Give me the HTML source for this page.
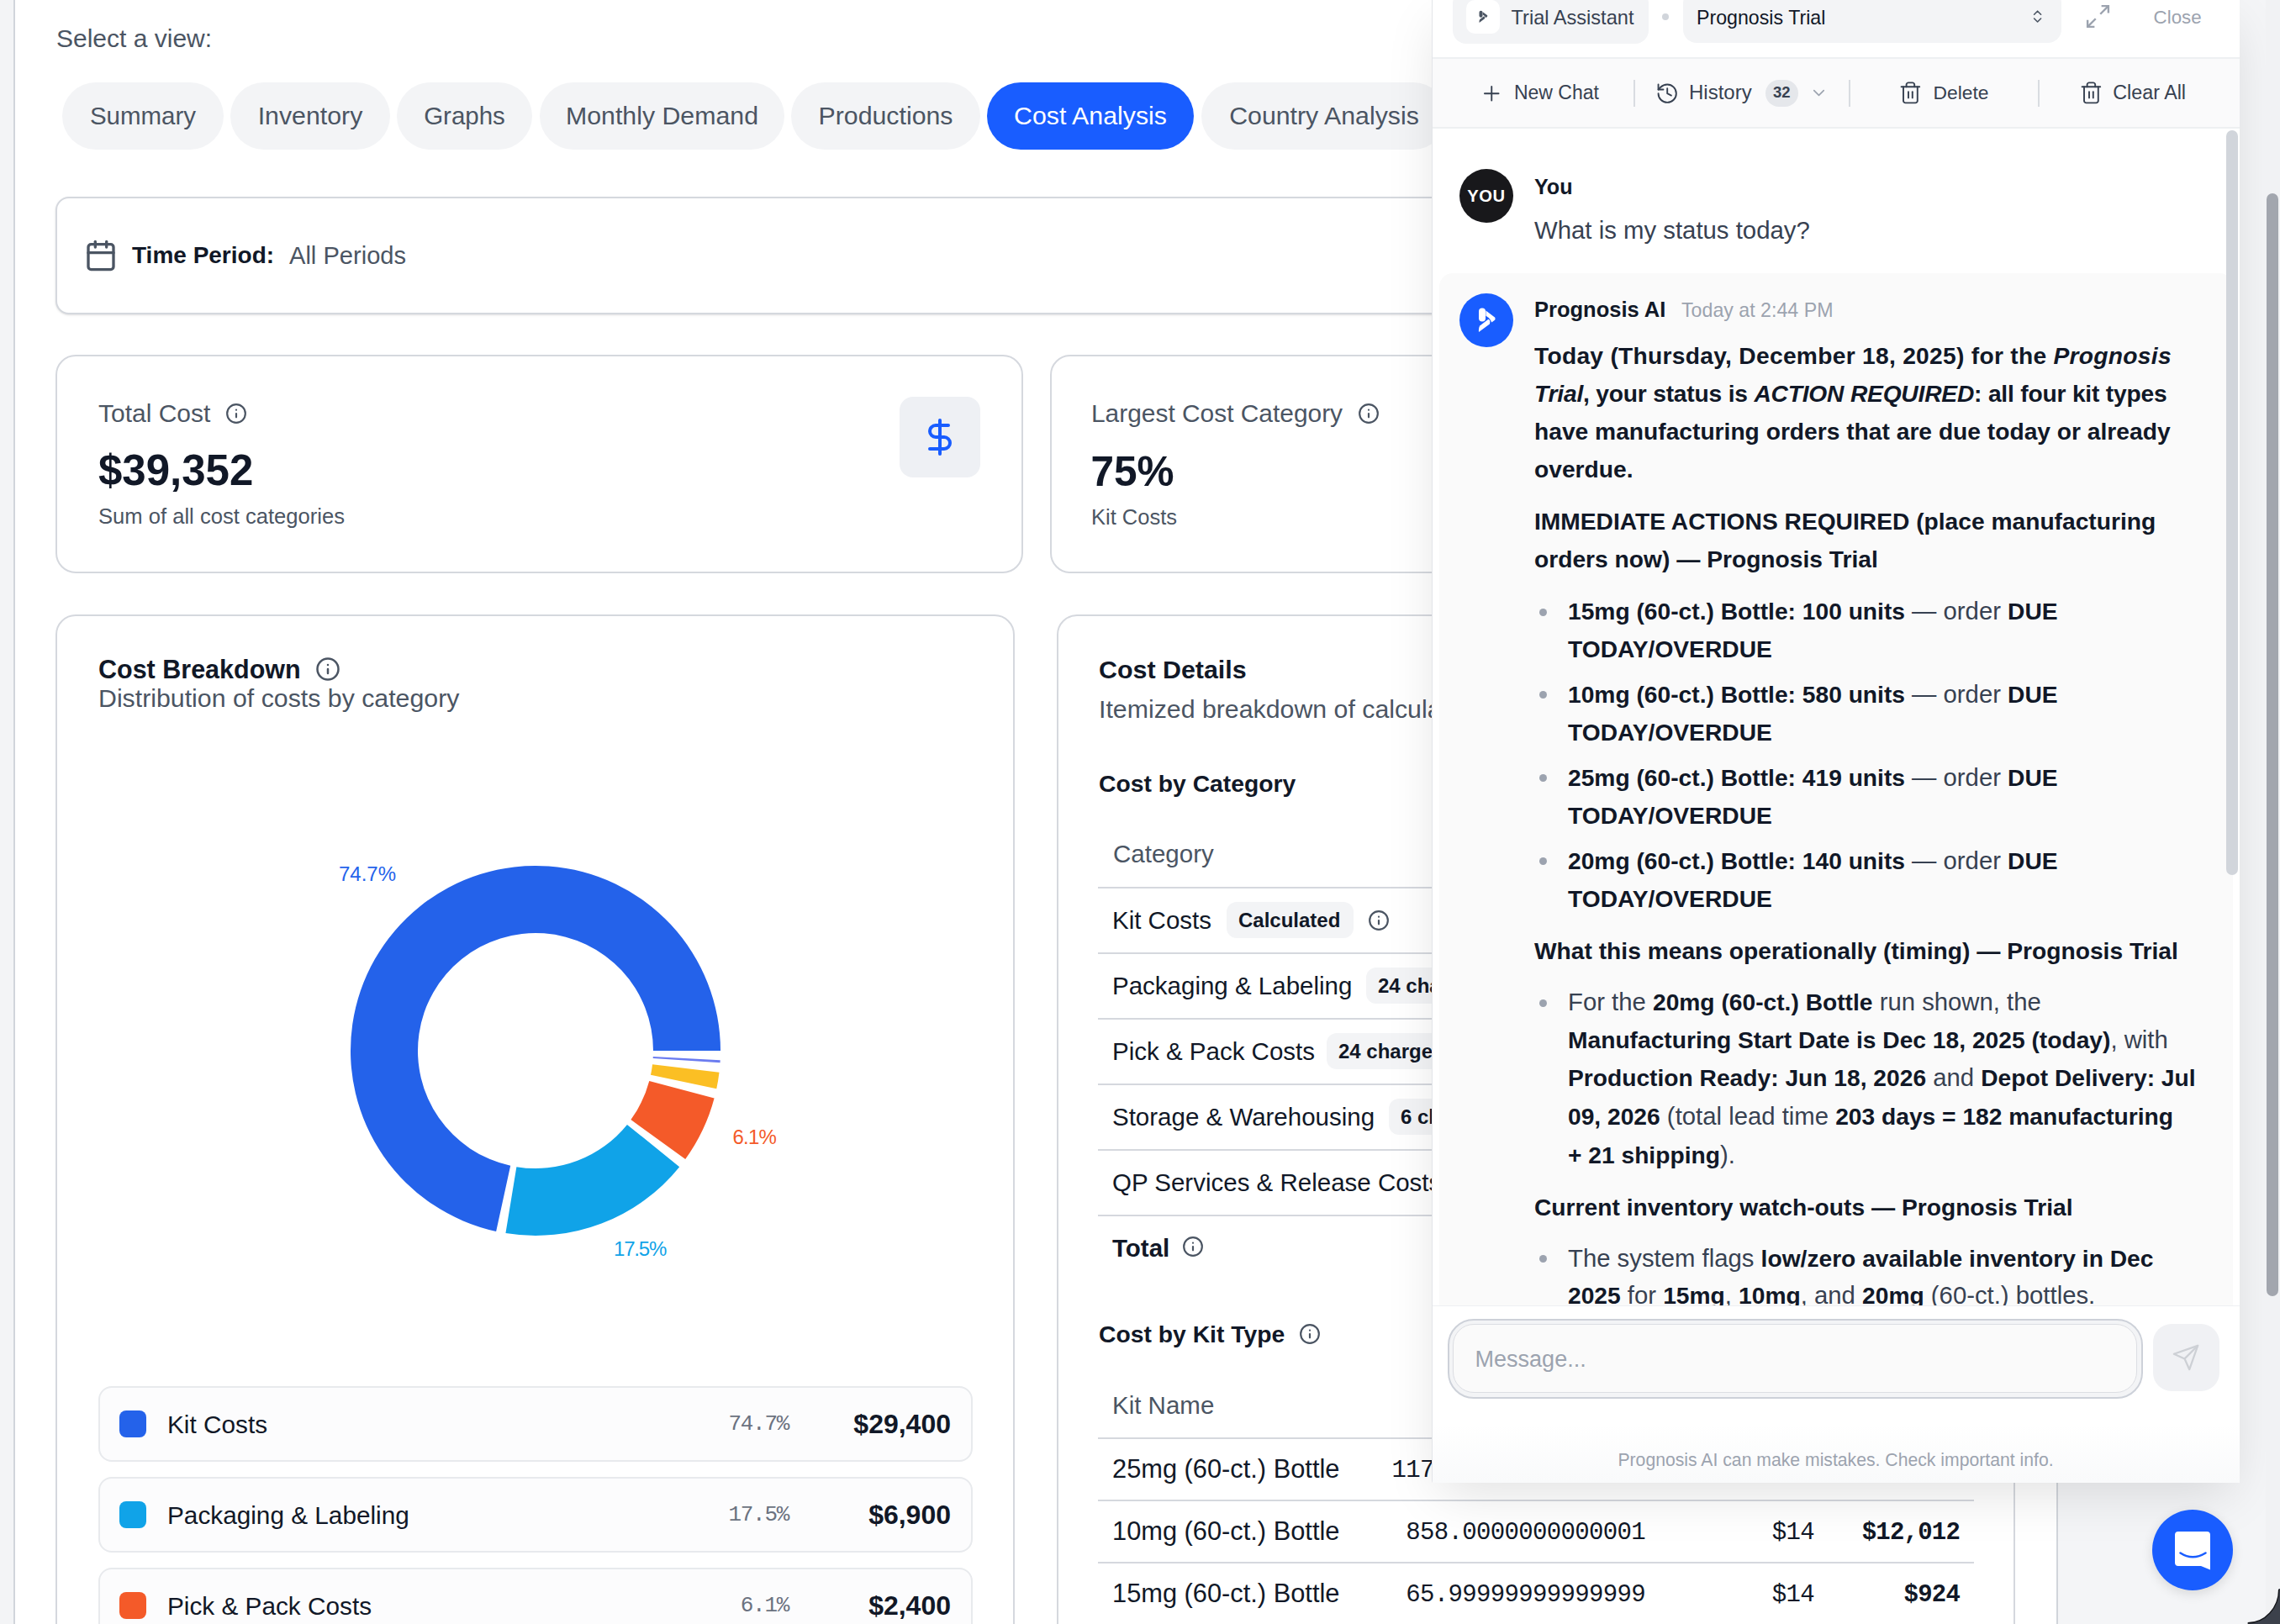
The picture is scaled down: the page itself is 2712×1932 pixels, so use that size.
<!DOCTYPE html>
<html><head><meta charset="utf-8">
<style>
*{box-sizing:border-box;margin:0;padding:0}
html,body{width:2712px;height:1932px;overflow:hidden;background:#f3f4f6}
body{font-family:"Liberation Sans",sans-serif;color:#111827;position:relative}
.a{position:absolute;white-space:nowrap;line-height:1}
.g6{color:#4b5563}
.card{position:absolute;border:2px solid #d5d8de;background:#fff}
.pill{position:absolute;top:98px;height:80px;border-radius:40px;background:#f3f4f6;color:#4b5563;font-size:30.3px;text-align:center;line-height:80px;white-space:nowrap}
.pill.on{background:#195dff;color:#fff}
svg{position:absolute;overflow:visible}
.ic{fill:none;stroke-linecap:round;stroke-linejoin:round}
.leg{position:absolute;left:117px;width:1040px;height:90px;border:2px solid #e8eaed;border-radius:16px;background:#fcfcfd}
.sw{position:absolute;left:23px;top:26.5px;width:32px;height:32px;border-radius:8px}
.ln{position:absolute;left:80px;top:29px;font-size:29.75px;line-height:1;white-space:nowrap;color:#111827}
.lp{position:absolute;right:217px;top:30px;font-family:"Liberation Mono",monospace;font-size:26px;letter-spacing:-1.3px;line-height:1;color:#6b7280}
.la{position:absolute;right:24px;top:27px;font-size:32px;font-weight:700;line-height:1;color:#111827}
.hr{position:absolute;left:1306px;width:1042px;height:2px;background:#d5d8de}
.badge{position:absolute;height:43px;border-radius:12px;background:#f3f4f6;font-size:24px;font-weight:700;line-height:43px;padding-left:14px;white-space:nowrap;color:#111827}
.mono{font-family:"Liberation Mono",monospace}
.cl{font-size:29.3px;color:#374151}
.cl b{font-size:28.2px;color:#111827}
</style></head><body>
<!-- left strip + container border -->
<div style="position:absolute;left:16px;top:0;width:2px;height:1932px;background:#d1d5db"></div>
<div style="position:absolute;left:18px;top:0;width:2429px;height:1932px;background:#fff"></div>
<div style="position:absolute;left:2446px;top:0;width:2px;height:1932px;background:#d1d5db"></div>
<div style="position:absolute;left:2448px;top:0;width:264px;height:1932px;background:#f4f5f7"></div>

<div class="a g6" style="left:67px;top:30.6px;font-size:30px">Select a view:</div>

<div class="pill" style="left:74px;width:192px;font-size:29.5px">Summary</div>
<div class="pill" style="left:274px;width:190px">Inventory</div>
<div class="pill" style="left:472px;width:161px;font-size:29.5px">Graphs</div>
<div class="pill" style="left:642px;width:291px">Monthly Demand</div>
<div class="pill" style="left:941px;width:225px">Productions</div>
<div class="pill on" style="left:1174px;width:246px">Cost Analysis</div>
<div class="pill" style="left:1429px;width:292px">Country Analysis</div>

<!-- Time period card -->
<div class="card" style="left:66px;top:234px;width:2331px;height:139.5px;border-radius:16px;box-shadow:0 1px 3px rgba(0,0,0,.1),0 1px 2px -1px rgba(0,0,0,.1)"></div>
<svg style="left:100px;top:284px" width="40" height="40" viewBox="0 0 24 24" class="ic" stroke="#4b5563" stroke-width="2"><path d="M8 2v4"/><path d="M16 2v4"/><rect width="18" height="18" x="3" y="4" rx="2"/><path d="M3 10h18"/></svg>
<div class="a" style="left:157px;top:290px;font-size:28px;font-weight:700;color:#111827">Time Period:</div>
<div class="a g6" style="left:344px;top:290px;font-size:29.1px">All Periods</div>

<!-- KPI cards -->
<div class="card" style="left:66px;top:422px;width:1150.5px;height:260px;border-radius:24px"></div>
<div class="a g6" style="left:117px;top:477px;font-size:30px">Total Cost</div>
<svg style="left:268px;top:479px" width="26" height="26" viewBox="0 0 24 24" class="ic" stroke="#4b5563" stroke-width="2"><circle cx="12" cy="12" r="10"/><path d="M12 16v-4"/><path d="M12 8h.01"/></svg>
<div class="a" style="left:117px;top:534px;font-size:51px;font-weight:700;color:#111827">$39,352</div>
<div class="a g6" style="left:117px;top:602px;font-size:25.6px">Sum of all cost categories</div>
<div style="position:absolute;left:1070px;top:472px;width:96px;height:96px;border-radius:16px;background:#eef0f4"></div>
<svg style="left:1094px;top:496px" width="48" height="48" viewBox="0 0 24 24" class="ic" stroke="#195dff" stroke-width="2"><line x1="12" x2="12" y1="2" y2="22"/><path d="M17 5H9.5a3.5 3.5 0 0 0 0 7h5a3.5 3.5 0 0 1 0 7H6"/></svg>

<div class="card" style="left:1248.5px;top:422px;width:1148.5px;height:260px;border-radius:24px"></div>
<div class="a g6" style="left:1298px;top:477px;font-size:29.9px">Largest Cost Category</div>
<svg style="left:1615px;top:479px" width="26" height="26" viewBox="0 0 24 24" class="ic" stroke="#4b5563" stroke-width="2"><circle cx="12" cy="12" r="10"/><path d="M12 16v-4"/><path d="M12 8h.01"/></svg>
<div class="a" style="left:1297.5px;top:535.5px;font-size:49.5px;font-weight:700;color:#111827">75%</div>
<div class="a g6" style="left:1298px;top:602.6px;font-size:25.5px">Kit Costs</div>

<!-- Cost breakdown card -->
<div class="card" style="left:66px;top:731px;width:1141px;height:1300px;border-radius:24px"></div>
<div class="a" style="left:117px;top:781px;font-size:30.5px;font-weight:700;color:#111827">Cost Breakdown</div>
<svg style="left:375px;top:781px" width="30" height="30" viewBox="0 0 24 24" class="ic" stroke="#4b5563" stroke-width="2"><circle cx="12" cy="12" r="10"/><path d="M12 16v-4"/><path d="M12 8h.01"/></svg>
<div class="a g6" style="left:117px;top:816px;font-size:30.3px">Distribution of costs by category</div>

<svg id="donut" style="left:0;top:0" width="2712" height="1932"><path d="M857.00 1250.00A220 220 0 1 0 590.13 1464.95L607.18 1386.79A140 140 0 1 1 777.00 1250.00Z" fill="#2462ea"/><path d="M601.45 1467.11A220 220 0 0 0 808.21 1388.15L745.95 1337.91A140 140 0 0 1 614.38 1388.16Z" fill="#10a3e8"/><path d="M815.21 1379.00A220 220 0 0 0 849.60 1306.57L772.29 1286.00A140 140 0 0 1 750.41 1332.09Z" fill="#f45a29"/><path d="M852.27 1295.36A220 220 0 0 0 855.50 1275.67L776.04 1266.33A140 140 0 0 1 773.99 1278.87Z" fill="#fbbf24"/><path d="M856.54 1264.20A220 220 0 0 0 856.72 1261.13L776.82 1257.08A140 140 0 0 1 776.71 1259.03Z" fill="#6b7cf0"/></svg>

<div class="a" style="left:403px;top:1028px;font-size:24px;color:#2563eb">74.7%</div>
<div class="a" style="left:871.5px;top:1341px;font-size:24px;letter-spacing:-0.8px;color:#f45a29">6.1%</div>
<div class="a" style="left:730px;top:1474px;font-size:24px;letter-spacing:-1.2px;color:#10a3e8">17.5%</div>

<div class="leg" style="top:1649px"><div class="sw" style="background:#2462ea"></div><div class="ln">Kit Costs</div><div class="lp">74.7%</div><div class="la">$29,400</div></div>
<div class="leg" style="top:1757px"><div class="sw" style="background:#10a3e8"></div><div class="ln">Packaging &amp; Labeling</div><div class="lp">17.5%</div><div class="la">$6,900</div></div>
<div class="leg" style="top:1865px"><div class="sw" style="background:#f45a29"></div><div class="ln">Pick &amp; Pack Costs</div><div class="lp">6.1%</div><div class="la">$2,400</div></div>

<!-- Cost details card -->
<div class="card" style="left:1257px;top:731px;width:1140px;height:1300px;border-radius:24px"></div>
<div class="a" style="left:1307px;top:781px;font-size:30.4px;font-weight:700;color:#111827">Cost Details</div>
<div class="a g6" style="left:1307px;top:829px;font-size:30.3px">Itemized breakdown of calculated costs by category and kit type</div>
<div class="a" style="left:1307px;top:918px;font-size:28.3px;font-weight:700;color:#111827">Cost by Category</div>
<div class="a g6" style="left:1324px;top:1001px;font-size:29.5px">Category</div>
<div class="hr" style="top:1055px"></div>
<div class="a" style="left:1323px;top:1080px;font-size:29.5px">Kit Costs</div>
<div class="badge" style="left:1459px;top:1073px;width:151px">Calculated</div>
<svg style="left:1627px;top:1082px" width="26" height="26" viewBox="0 0 24 24" class="ic" stroke="#4b5563" stroke-width="2"><circle cx="12" cy="12" r="10"/><path d="M12 16v-4"/><path d="M12 8h.01"/></svg>
<div class="hr" style="top:1133px"></div>
<div class="a" style="left:1323px;top:1158px;font-size:29.5px">Packaging &amp; Labeling</div>
<div class="badge" style="left:1625px;top:1151px;width:160px">24 charges</div>
<div class="hr" style="top:1211px"></div>
<div class="a" style="left:1323px;top:1236px;font-size:29.5px">Pick &amp; Pack Costs</div>
<div class="badge" style="left:1578px;top:1229px;width:160px">24 charges</div>
<div class="hr" style="top:1289px"></div>
<div class="a" style="left:1323px;top:1314px;font-size:29.5px">Storage &amp; Warehousing</div>
<div class="badge" style="left:1652px;top:1307px;width:150px">6 charges</div>
<div class="hr" style="top:1367px"></div>
<div class="a" style="left:1323px;top:1392px;font-size:29.5px">QP Services &amp; Release Costs</div>
<div class="hr" style="top:1445px"></div>
<div class="a" style="left:1323px;top:1470px;font-size:29.5px;font-weight:700">Total</div>
<svg style="left:1406px;top:1470px" width="26" height="26" viewBox="0 0 24 24" class="ic" stroke="#4b5563" stroke-width="2"><circle cx="12" cy="12" r="10"/><path d="M12 16v-4"/><path d="M12 8h.01"/></svg>

<div class="a" style="left:1307px;top:1573px;font-size:28.3px;font-weight:700;color:#111827">Cost by Kit Type</div>
<svg style="left:1545px;top:1574px" width="26" height="26" viewBox="0 0 24 24" class="ic" stroke="#4b5563" stroke-width="2"><circle cx="12" cy="12" r="10"/><path d="M12 16v-4"/><path d="M12 8h.01"/></svg>
<div class="a g6" style="left:1323px;top:1657px;font-size:29.5px">Kit Name</div>
<div class="hr" style="top:1710px"></div>
<div class="a" style="left:1323px;top:1733px;font-size:30.8px">25mg (60-ct.) Bottle</div>
<div class="a mono" style="right:755px;top:1735px;font-size:29px;letter-spacing:-0.65px">117.00000000000001</div>
<div class="hr" style="top:1784px"></div>
<div class="a" style="left:1323px;top:1807px;font-size:30.8px">10mg (60-ct.) Bottle</div>
<div class="a mono" style="right:755px;top:1809px;font-size:29px;letter-spacing:-0.65px">858.0000000000001</div>
<div class="a mono" style="right:554px;top:1809px;font-size:29px;letter-spacing:-0.65px">$14</div>
<div class="a mono" style="right:381px;top:1809px;font-size:29px;letter-spacing:-0.8px;font-weight:700">$12,012</div>
<div class="hr" style="top:1858px"></div>
<div class="a" style="left:1323px;top:1881px;font-size:30.8px">15mg (60-ct.) Bottle</div>
<div class="a mono" style="right:755px;top:1883px;font-size:29px;letter-spacing:-0.65px">65.99999999999999</div>
<div class="a mono" style="right:554px;top:1883px;font-size:29px;letter-spacing:-0.65px">$14</div>
<div class="a mono" style="right:381px;top:1883px;font-size:29px;letter-spacing:-0.8px;font-weight:700">$924</div>

<!-- CHAT PANEL PLACEHOLDER -->
<div style="position:absolute;left:1703px;top:0;width:961px;height:1764px;background:#fff;border-left:1px solid #e3e5e9;box-shadow:0 20px 60px -10px rgba(0,0,0,.13);border-bottom-left-radius:2px"></div>
<div style="position:absolute;left:1704px;top:68px;width:960px;height:2px;background:#eef0f2"></div>
<div style="position:absolute;left:1728px;top:-12px;width:233px;height:63.5px;border-radius:16px;background:#f3f4f6"></div>
<div style="position:absolute;left:1744px;top:-0.5px;width:40px;height:40px;border-radius:10px;background:#fff"></div>
<svg style="left:1744px;top:-0.5px" width="40" height="40" viewBox="0 0 64 64"><g fill="#4b5563" transform="translate(32 32) scale(0.8) translate(-32 -32)"><rect x="23" y="17.5" width="8" height="16" rx="4"/><path d="M31.4 20.4 L42.3 28.7 Q43 31 42 31.7 L38.3 34.6 L36.9 31.7 Q35 28.6 31.4 26.8Z"/><path d="M23 46 Q22.6 40.5 24.6 38.2 L34.4 30.7 Q36.6 31.8 36.4 33.7 L35.9 36.6Z"/></g></svg>
<div class="a" style="left:1797.5px;top:9.5px;font-size:23.6px;color:#374151">Trial Assistant</div>
<div style="position:absolute;left:1976.7px;top:16.2px;width:8px;height:8px;border-radius:4px;background:#d1d5db"></div>
<div style="position:absolute;left:2001.5px;top:-12px;width:450.5px;height:63px;border-radius:16px;background:#f3f4f6"></div>
<div class="a" style="left:2018px;top:10.4px;font-size:23.2px;color:#111827">Prognosis Trial</div>
<svg style="left:2414.4px;top:10.25px" width="19.2" height="19.2" viewBox="0 0 24 24" class="ic" stroke="#4b5563" stroke-width="2"><path d="m7 15 5 5 5-5"/><path d="m7 9 5-5 5 5"/></svg>
<svg style="left:2479.3px;top:3.4px" width="33" height="33" viewBox="0 0 24 24" fill="none" stroke="#9ca3af" stroke-width="1.75" stroke-linecap="butt" stroke-linejoin="miter"><polyline points="15 3 21 3 21 9"/><polyline points="9 21 3 21 3 15"/><line x1="21" x2="14" y1="3" y2="10"/><line x1="3" x2="10" y1="21" y2="14"/></svg>
<div class="a" style="left:2561.6px;top:10.1px;font-size:22.3px;color:#9ca3af">Close</div>
<div style="position:absolute;left:1704px;top:70px;width:960px;height:81px;background:#fafafb"></div>
<div style="position:absolute;left:1704px;top:151px;width:960px;height:2px;background:#eef0f2"></div>
<svg style="left:1759.75px;top:96.75px" width="28.5" height="28.5" viewBox="0 0 24 24" class="ic" stroke="#374151" stroke-width="1.6"><path d="M5 12h14"/><path d="M12 5v14"/></svg>
<div class="a" style="left:1800.9px;top:98.9px;font-size:23px;color:#374151">New Chat</div>
<div style="position:absolute;left:1943px;top:95.4px;width:2px;height:31.4px;background:#d9dce1"></div>
<svg style="left:1968.5px;top:96.55px" width="28.4" height="28.4" viewBox="0 0 24 24" class="ic" stroke="#374151" stroke-width="1.6"><path d="M3 12a9 9 0 1 0 9-9 9.75 9.75 0 0 0-6.74 2.74L3 8"/><path d="M3 3v5h5"/><path d="M12 7v5l4 2"/></svg>
<div class="a" style="left:2009px;top:98.1px;font-size:24px;color:#374151">History</div>
<div style="position:absolute;left:2100px;top:95.3px;width:39px;height:31.4px;border-radius:16px;background:#e5e7eb"></div>
<div class="a" style="left:2109px;top:100.8px;font-size:18.5px;font-weight:700;color:#374151">32</div>
<svg style="left:2151.7px;top:99.25px" width="23" height="23" viewBox="0 0 24 24" class="ic" stroke="#9ca3af" stroke-width="1.7"><path d="m6 9 6 6 6-6"/></svg>
<div style="position:absolute;left:2198.7px;top:95.4px;width:2px;height:31.4px;background:#d9dce1"></div>
<svg style="left:2258.35px;top:96.45px" width="28.8" height="28.8" viewBox="0 0 24 24" class="ic" stroke="#374151" stroke-width="1.6"><path d="M3 6h18"/><path d="M19 6v14c0 1-1 2-2 2H7c-1 0-2-1-2-2V6"/><path d="M8 6V4c0-1 1-2 2-2h4c1 0 2 1 2 2v2"/><line x1="10" x2="10" y1="11" y2="17"/><line x1="14" x2="14" y1="11" y2="17"/></svg>
<div class="a" style="left:2299.5px;top:99.1px;font-size:22.8px;color:#374151">Delete</div>
<div style="position:absolute;left:2424px;top:95.4px;width:2px;height:31.4px;background:#d9dce1"></div>
<svg style="left:2472.8px;top:96.45px" width="28.8" height="28.8" viewBox="0 0 24 24" class="ic" stroke="#374151" stroke-width="1.6"><path d="M3 6h18"/><path d="M19 6v14c0 1-1 2-2 2H7c-1 0-2-1-2-2V6"/><path d="M8 6V4c0-1 1-2 2-2h4c1 0 2 1 2 2v2"/><line x1="10" x2="10" y1="11" y2="17"/><line x1="14" x2="14" y1="11" y2="17"/></svg>
<div class="a" style="left:2513.3px;top:98.7px;font-size:23.3px;color:#374151">Clear All</div>
<div style="position:absolute;left:0;top:153px;width:2712px;height:1400px;overflow:hidden"><div style="position:absolute;left:0;top:-153px;width:2712px;height:1932px">
<div style="position:absolute;left:1736px;top:200.7px;width:64px;height:64px;border-radius:32px;background:#18181b"></div>
<div class="a" style="left:1736px;width:64px;text-align:center;top:222.8px;font-size:20.2px;font-weight:700;letter-spacing:0.6px;color:#fff">YOU</div>
<div class="a" style="left:1825px;top:209.5px;font-size:25.1px;font-weight:700;color:#111827">You</div>
<div class="a" style="left:1825px;top:259.0px;font-size:29.35px;color:#374151">What is my status today?</div>
<div style="position:absolute;left:1712px;top:324.5px;width:944px;height:1400px;border-radius:16px;background:#fafafa"></div>
<div style="position:absolute;left:1736px;top:348.7px;width:64px;height:64px;border-radius:32px;background:#195dff"></div>
<svg style="left:1736px;top:348.7px" width="64" height="64" viewBox="0 0 64 64"><g fill="#fff"><rect x="23" y="17.5" width="8" height="16" rx="4"/><path d="M31.4 20.4 L42.3 28.7 Q43 31 42 31.7 L38.3 34.6 L36.9 31.7 Q35 28.6 31.4 26.8Z"/><path d="M23 46 Q22.6 40.5 24.6 38.2 L34.4 30.7 Q36.6 31.8 36.4 33.7 L35.9 36.6Z"/></g></svg>
<div class="a" style="left:1825px;top:356.4px;font-size:25.5px;font-weight:700;color:#111827">Prognosis AI</div>
<div class="a" style="left:2000px;top:358.4px;font-size:23.2px;color:#9ca3af">Today at 2:44 PM</div>
<div class="a cl" style="left:1825px;top:407.7px;letter-spacing:0.28px"><b>Today (Thursday, December 18, 2025) for the </b><b><i>Prognosis</i></b></div>
<div class="a cl" style="left:1825px;top:452.7px;letter-spacing:-0.2px"><b><i>Trial</i></b><b>, your status is </b><b><i>ACTION REQUIRED</i></b><b>: all four kit types</b></div>
<div class="a cl" style="left:1825px;top:497.7px"><b>have manufacturing orders that are due today or already</b></div>
<div class="a cl" style="left:1825px;top:542.7px"><b>overdue.</b></div>
<div class="a cl" style="left:1825px;top:604.7px"><b>IMMEDIATE ACTIONS REQUIRED (place manufacturing</b></div>
<div class="a cl" style="left:1825px;top:650.2px"><b>orders now) — Prognosis Trial</b></div>
<div style="position:absolute;left:1831px;top:723.5px;width:9px;height:9px;border-radius:5px;background:#9ca3af"></div>
<div class="a cl" style="left:1865px;top:712.2px"><b>15mg (60-ct.) Bottle: 100 units</b> — order <b>DUE</b></div>
<div class="a cl" style="left:1865px;top:757.0px"><b>TODAY/OVERDUE</b></div>
<div style="position:absolute;left:1831px;top:822.4px;width:9px;height:9px;border-radius:5px;background:#9ca3af"></div>
<div class="a cl" style="left:1865px;top:811.1px"><b>10mg (60-ct.) Bottle: 580 units</b> — order <b>DUE</b></div>
<div class="a cl" style="left:1865px;top:855.9px"><b>TODAY/OVERDUE</b></div>
<div style="position:absolute;left:1831px;top:921.2px;width:9px;height:9px;border-radius:5px;background:#9ca3af"></div>
<div class="a cl" style="left:1865px;top:909.9px"><b>25mg (60-ct.) Bottle: 419 units</b> — order <b>DUE</b></div>
<div class="a cl" style="left:1865px;top:954.7px"><b>TODAY/OVERDUE</b></div>
<div style="position:absolute;left:1831px;top:1020.0px;width:9px;height:9px;border-radius:5px;background:#9ca3af"></div>
<div class="a cl" style="left:1865px;top:1008.7px"><b>20mg (60-ct.) Bottle: 140 units</b> — order <b>DUE</b></div>
<div class="a cl" style="left:1865px;top:1053.5px"><b>TODAY/OVERDUE</b></div>
<div class="a cl" style="left:1825px;top:1116.2px"><b>What this means operationally (timing) — Prognosis Trial</b></div>
<div style="position:absolute;left:1831px;top:1188.5px;width:9px;height:9px;border-radius:5px;background:#9ca3af"></div>
<div class="a cl" style="left:1865px;top:1177.2px">For the <b>20mg (60-ct.) Bottle</b> run shown, the</div>
<div class="a cl" style="left:1865px;top:1221.7px"><b>Manufacturing Start Date is Dec 18, 2025 (today)</b>, with</div>
<div class="a cl" style="left:1865px;top:1267.4px"><b>Production Ready: Jun 18, 2026</b> and <b>Depot Delivery: Jul</b></div>
<div class="a cl" style="left:1865px;top:1313.0px"><b>09, 2026</b> (total lead time <b>203 days = 182 manufacturing</b></div>
<div class="a cl" style="left:1865px;top:1358.5px"><b>+ 21 shipping</b>).</div>
<div class="a cl" style="left:1825px;top:1421.1px"><b>Current inventory watch-outs — Prognosis Trial</b></div>
<div style="position:absolute;left:1831px;top:1493.3px;width:9px;height:9px;border-radius:5px;background:#9ca3af"></div>
<div class="a cl" style="left:1865px;top:1482.0px">The system flags <b>low/zero available inventory in Dec</b></div>
<div class="a cl" style="left:1865px;top:1526.4px"><b>2025</b> for <b>15mg</b>, <b>10mg</b>, and <b>20mg</b> (60-ct.) bottles.</div>
<div style="position:absolute;left:2648px;top:155px;width:14px;height:886px;border-radius:7px;background:#d1d5db"></div>
</div></div>
<div style="position:absolute;left:1704px;top:1553px;width:960px;height:1px;background:#eef0f2"></div>
<div style="position:absolute;left:1704px;top:1694px;width:960px;height:70px;background:linear-gradient(#fff,#f9fafb)"></div>
<div style="position:absolute;left:1722.2px;top:1568.9px;width:826.8px;height:94.9px;border-radius:31px;border:2px solid #cdd1d9;background:#f3f4f6"></div>
<div style="position:absolute;left:1728.1px;top:1575.2px;width:814.4px;height:82px;border-radius:25px;border:1.5px solid #dcdee3;background:#fafafa"></div>
<div class="a" style="left:1754.6px;top:1604.1px;font-size:27px;color:#9ca3af">Message...</div>
<div style="position:absolute;left:2560.5px;top:1575.2px;width:79px;height:79.6px;border-radius:22px;background:#f0f1f4"></div>
<svg style="left:2583px;top:1597.6px" width="34" height="34" viewBox="0 0 24 24" class="ic" stroke="#cdd0d5" stroke-width="1.6"><path d="m22 2-7 20-4-9-9-4Z"/><path d="M22 2 11 13"/></svg>
<div class="a" style="left:1703px;width:961px;text-align:center;top:1726.1px;font-size:21.2px;color:#9ca3af">Prognosis AI can make mistakes. Check important info.</div>
<div style="position:absolute;left:2695px;top:0;width:17px;height:1932px;background:#f1f2f4"></div>
<div style="position:absolute;left:2696px;top:230px;width:14px;height:1312px;border-radius:7px;background:#a2a6ae"></div>
<svg style="left:2672px;top:1890px" width="40" height="42" viewBox="0 0 40 42"><path d="M38.7 0 L40 0 L40 42 L1.7 42 L1.7 40.7 A37 40 0 0 0 38.7 0.7 Z" fill="#3c414b"/><path d="M1.7 40.7 A37 40 0 0 0 38.7 0.7" fill="none" stroke="#15171b" stroke-width="1.4"/></svg>
<div style="position:absolute;left:2560px;top:1796px;width:96px;height:96px;border-radius:48px;background:#195dff;box-shadow:0 4px 14px rgba(0,0,0,.12)"></div>
<svg style="left:2560px;top:1796px" width="96" height="96" viewBox="0 0 96 96"><path d="M31 26 Q27 26 27 30 L27 63 Q27 67 31 67 L58 67 L69 71.5 L69 30 Q69 26 65 26Z" fill="#fff"/><path d="M33.5 51.5 Q48 61 63.5 51.5" fill="none" stroke="#195dff" stroke-width="2.6" stroke-linecap="round"/></svg>
</body></html>
